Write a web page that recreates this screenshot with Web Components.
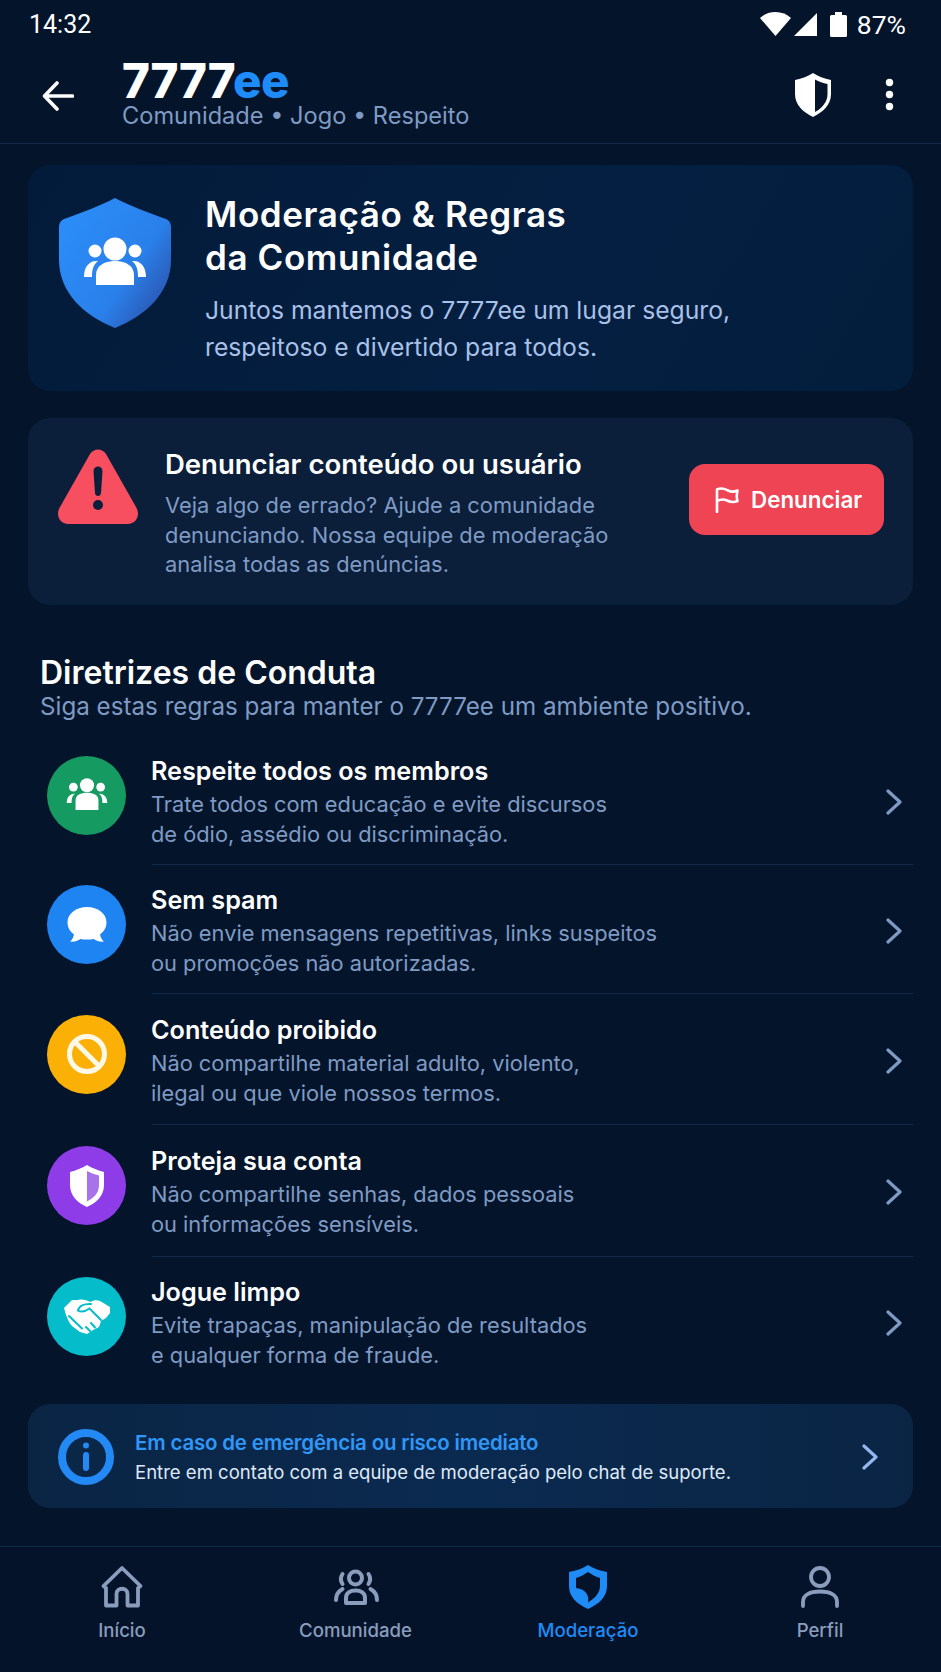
<!DOCTYPE html>
<html lang="pt">
<head>
<meta charset="utf-8">
<title>7777ee</title>
<style>
	html, body { margin: 0; height: 100%; }
	body {
		background: #04142a;
		color: #fff;
		font-family: Inter, "Noto Sans", sans-serif;
		width: 941px;
		height: 1672px;
		overflow: hidden;
	}
	#app { display: flex; flex-direction: column; height: 1672px; }
</style>
</head>
<body>
<div id="app">
	<status-bar></status-bar>
	<app-header></app-header>
	<page-main>
		<hero-card>
			<span slot="title">Moderação &amp; Regras<br>da Comunidade</span>
			Juntos mantemos o 7777ee um lugar seguro,<br>respeitoso e divertido para todos.
		</hero-card>
		<report-card>
			<span slot="title">Denunciar conteúdo ou usuário</span>
			Veja algo de errado? Ajude a comunidade<br>denunciando. Nossa equipe de moderação<br>analisa todas as denúncias.
		</report-card>
		<section-head>
			<span slot="title">Diretrizes de Conduta</span>
			Siga estas regras para manter o 7777ee um ambiente positivo.
		</section-head>
		<rule-list>
			<rule-row style="--c:#159a62;--h:130.4px">
				<svg slot="icon" width="44" height="36" viewBox="0 0 50 40" fill="#fff"><circle cx="25" cy="9" r="8"/><circle cx="9.500" cy="11" r="5"/><circle cx="40.500" cy="11" r="5"/><path d="M12 37V26C12 20 18 17.500 25 17.500S38 20 38 26V37Z"/><path d="M2 29C2 22 6 18 11.500 18.500 8 21 7.500 24.500 7.500 29Z"/><path d="M48 29C48 22 44 18 38.500 18.500 42 21 42.500 24.500 42.500 29Z"/></svg>
				<span slot="title">Respeite todos os membros</span>
				Trate todos com educação e evite discursos<br>de ódio, assédio ou discriminação.
			</rule-row>
			<rule-row style="--c:#1d84f2;--h:128.4px">
				<svg slot="icon" width="42" height="38" viewBox="0 0 42 38" fill="#fff"><path d="M21 1C32 1 40.500 7.500 40.500 16.500 40.500 21.500 38 25.500 34 28.500 34.500 31 36 34 38 35.500 34 36 30.500 35 27.500 33 25.500 33.500 23.500 33.500 21 33.500 18.500 33.500 16.500 33.500 14.500 33 11.500 35 8 36 4 35.500 6 34 7.500 31 8 28.500 4 25.500 1.500 21.500 1.500 16.500 1.500 7.500 10 1 21 1Z"/></svg>
				<span slot="title">Sem spam</span>
				Não envie mensagens repetitivas, links suspeitos<br>ou promoções não autorizadas.
			</rule-row>
			<rule-row style="--c:#fab005;--h:131.4px">
				<svg slot="icon" width="42" height="42" viewBox="0 0 42 42" fill="none" stroke="#fff8e6" stroke-width="5"><circle cx="21" cy="21" r="17.500"/><path d="M8.500 8.500 33.500 33.500"/></svg>
				<span slot="title">Conteúdo proibido</span>
				Não compartilhe material adulto, violento,<br>ilegal ou que viole nossos termos.
			</rule-row>
			<rule-row style="--c:#8d3ce8;--h:131.4px">
				<svg slot="icon" width="36" height="42" viewBox="0 0 36 42"><path fill="#fff" d="M18 0C23 3 29 5.500 35 7V20C35 31 27 38 18 42 9 38 1 31 1 20V7C7 5.500 13 3 18 0Z"/><path fill="#a873ea" d="M18 6C22 8 26 9.500 30 10.500V20C30 28 25 33 18 36.500Z"/></svg>
				<span slot="title">Proteja sua conta</span>
				Não compartilhe senhas, dados pessoais<br>ou informações sensíveis.
			</rule-row>
			<rule-row style="--c:#05bccb;--h:130.4px" last>
				<svg slot="icon" width="46" height="35" viewBox="0 0 46 35">
					<path fill="#fff" d="M0 9 8 1 14 1C18 0 23 1 26 3 30 1 33 1 36 2L46 8V14L42 19 37 22 35 28 29 31 23 35 16 33 8 27 5 23 2 16Z"/>
					<g fill="none" stroke="#05bccb" stroke-width="2" stroke-linecap="round">
						<path d="M14 11.500C15 7 20 4.500 27 5"/>
						<path d="M14 11.500C18 14 22 12 25.500 9.500L37 21"/>
						<path d="M5 17 18 29.500"/>
						<path d="M27 24 31 28.500M22 28 26 32"/>
					</g>
				</svg>
				<span slot="title">Jogue limpo</span>
				Evite trapaças, manipulação de resultados<br>e qualquer forma de fraude.
			</rule-row>
		</rule-list>
		<info-card>
			<span slot="title">Em caso de emergência ou risco imediato</span>
			Entre em contato com a equipe de moderação pelo chat de suporte.
		</info-card>
	</page-main>
	<bottom-nav>
		<nav-item>
			<svg slot="icon" width="44" height="44" viewBox="0 0 44 44" fill="none" stroke="#8a9dbd" stroke-width="3.800" stroke-linejoin="round"><path d="M3.500 21 22 3 40.500 21 38 23V40.500H27.500V29C27.500 22 16.500 22 16.500 29V40.500H6V23Z"/></svg>
			Início
		</nav-item>
		<nav-item>
			<svg slot="icon" width="50" height="40" viewBox="0 0 50 40" fill="none" stroke="#8a9dbd" stroke-width="4" stroke-linecap="round"><circle cx="24.500" cy="11" r="6.500"/><path d="M11.500 7C9.500 10 9.500 14 11.500 17M37.500 7C39.500 10 39.500 14 37.500 17"/><path d="M15 36V31C15 26 19 23.500 24.500 23.500S34 26 34 31V36Z" stroke-linejoin="round"/><path d="M5 33C5 27 8 24 11.500 22M46 33C46 27 43 24 39.500 22"/></svg>
			Comunidade
		</nav-item>
		<nav-item active>
			<svg slot="icon" width="40" height="44" viewBox="0 0 40 44"><path fill="#1f8bf5" d="M20 0C25 3.500 31 5.500 39 7V21C39 32 31 39 20 44 9 39 1 32 1 21V7C9 5.500 15 3.500 20 0Z"/><path fill="#041329" d="M20 7C24 9.500 27 11.500 32 13V21C32 28 27 33 20 37.500 21.500 31 18 24 8 23V13C13 11.500 16 9.500 20 7Z"/></svg>
			Moderação
		</nav-item>
		<nav-item>
			<svg slot="icon" width="40" height="42" viewBox="0 0 40 42" fill="none" stroke="#8a9dbd" stroke-width="3.800" stroke-linecap="round"><circle cx="20" cy="11" r="9"/><path d="M3 40V36C3 29 10 25.500 20 25.500S37 29 37 36V40"/></svg>
			Perfil
		</nav-item>
	</bottom-nav>
</div>
<script>
(function () {
	const chevron = `<svg width="18" height="26" viewBox="0 0 18 26" fill="none" stroke="currentColor" stroke-width="3.200" stroke-linecap="round" stroke-linejoin="round"><path d="M3 2 15 13 3 24"/></svg>`;

	// every element here is only markup and styles, so one helper does for all
	function define(name, html) {
		const tpl = document.createElement('template');
		tpl.innerHTML = html;
		customElements.define(name, class extends HTMLElement {
			constructor() {
				super();
				this.attachShadow({mode: 'open'});
				this.shadowRoot.appendChild(tpl.content.cloneNode(true));
			}
		});
	}

	define('status-bar', `
		<style>
		:host {
			display: flex;
			align-items: center;
			justify-content: space-between;
			box-sizing: border-box;
			height: 48px;
			padding: 0 35px 0 29px;
			font: 400 25px Roboto, sans-serif;
			color: #fff;
		}
		#icons { display: flex; align-items: center; }
		#pct { font-size: 26.500px; }
		svg { display: block; }
		</style>
		<span>14:32</span>
		<div id="icons">
			<svg width="31" height="24" viewBox="0 0 31 24" fill="#fff" style="margin-right:3px"><path d="M15.500 24 0 6C4 2 9.500 0 15.500 0S27 2 31 6Z"/></svg>
			<svg width="23" height="23" viewBox="0 0 23 23" fill="#fff" style="margin-right:13px"><path d="M23 0V23H0Z"/></svg>
			<svg width="17" height="25" viewBox="0 0 17 25" fill="#fff" style="margin-right:10px"><path d="M5 0H12V3H15.500Q17 3 17 4.500V23.500Q17 25 15.500 25H1.500Q0 25 0 23.500V4.500Q0 3 1.500 3H5Z"/></svg>
			<span id="pct">87%</span>
		</div>
	`);

	define('app-header', `
		<style>
		:host {
			display: flex;
			align-items: center;
			box-sizing: border-box;
			height: 96px;
			padding: 0 0 0 42px;
			border-bottom: 1px solid #10294a;
		}
		svg { display: block; flex: none; }
		#titles { flex: 1; margin-left: 48px; margin-top: -1px; }
		#logo { font-size: 47.500px; font-weight: 800; line-height: 40px; letter-spacing: -0.3px; color: #fff; }
		#logo span { color: #1d8cf8; }
		#sub { font-size: 23.600px; line-height: 28px; color: #7f9bc4; margin-top: 1px; }
		#shield { margin-right: 54px; margin-top: -2px; }
		#more { margin-right: 47px; margin-top: -2px; }
		</style>
		<svg width="32" height="30" viewBox="0 0 32 30" fill="none" stroke="#fff" stroke-width="3.600" stroke-linecap="round" stroke-linejoin="round"><path d="M30.500 15H3M15 2 2.500 15 15 28"/></svg>
		<div id="titles">
			<div id="logo">7777<span>ee</span></div>
			<div id="sub">Comunidade • Jogo • Respeito</div>
		</div>
		<svg id="shield" width="36" height="44" viewBox="0 0 36 44"><path fill="#fff" d="M18 0C23 3.500 29 5.500 36 7V21C36 32 28 39 18 44 8 39 0 32 0 21V7C7 5.500 13 3.500 18 0Z"/><path fill="#04142a" d="M20 6.500C24 8.500 28 10 32.500 11V21C32.500 29 27 35 20 39Z"/></svg>
		<svg id="more" width="9" height="33" viewBox="0 0 9 33" fill="#fff"><circle cx="4.500" cy="4.500" r="3.700"/><circle cx="4.500" cy="16.500" r="3.700"/><circle cx="4.500" cy="28.500" r="3.700"/></svg>
	`);

	define('page-main', `
		<style>
		:host {
			display: flex;
			flex-direction: column;
			flex: 1;
			box-sizing: border-box;
			padding: 21px 28px 0 28px;
		}
		</style>
		<slot></slot>
	`);

	define('hero-card', `
		<style>
		:host {
			display: flex;
			box-sizing: border-box;
			height: 226px;
			padding: 33px 0 0 31px;
			border-radius: 22px;
			background: linear-gradient(120deg, #031b3a 0%, #041f41 60%, #031d3c 100%);
		}
		svg { display: block; flex: none; }
		#text { margin-left: 34px; margin-top: -5px; }
		#title { font-size: 35px; font-weight: 600; line-height: 43px; letter-spacing: 0.6px; color: #fff; }
		#desc { font-size: 24.700px; line-height: 37px; color: #a9c1e8; margin-top: 13px; }
		</style>
		<svg width="112" height="130" viewBox="0 0 112 130">
			<path fill="url(#gHeroLocal)" d="M56 0C71 8 90 15 107 21 110 22.500 112 25 112 29V62C112 95 86 118 56 130 26 118 0 95 0 62V29C0 25 2 22.500 5 21 22 15 41 8 56 0Z"/>
			<defs><linearGradient id="gHeroLocal" x1="0.1" y1="0.15" x2="1" y2="0.85"><stop offset="0" stop-color="#2b8cf8"/><stop offset="0.6" stop-color="#2a80ea"/><stop offset="1" stop-color="#2b4ea6"/></linearGradient></defs>
			<g fill="#fff" transform="translate(25 39)">
				<circle cx="31" cy="12" r="11.500"/><circle cx="11" cy="14" r="6.500"/><circle cx="51" cy="14" r="6.500"/>
				<path d="M12 48V38C12 29 20 24 31 24S50 29 50 38V48Z"/>
				<path d="M0 40C0 29 6 23 14 24 9 28 8 33 8 40ZM62 40C62 29 56 23 48 24 53 28 54 33 54 40Z"/>
			</g>
		</svg>
		<div id="text">
			<div id="title"><slot name="title"></slot></div>
			<div id="desc"><slot></slot></div>
		</div>
	`);

	define('report-card', `
		<style>
		:host {
			display: flex;
			box-sizing: border-box;
			height: 187px;
			margin-top: 27px;
			padding: 31px 29px 0 30px;
			border-radius: 22px;
			background: #0b1e3a;
		}
		svg { display: block; flex: none; }
		#text { flex: 1; margin-left: 27px; margin-top: -2px; }
		#title { font-size: 27.500px; font-weight: 600; line-height: 34px; color: #fff; }
		#desc { font-size: 21.850px; line-height: 29.500px; color: #7f9bc4; margin-top: 10px; }
		#btn {
			display: flex;
			align-items: center;
			gap: 12px;
			box-sizing: border-box;
			width: 195px;
			height: 71px;
			margin-top: 15px;
			padding-left: 26px;
			border-radius: 16px;
			background: #ee4454;
			font-size: 22.400px;
			font-weight: 600;
			color: #fff;
		}
		</style>
		<svg width="80" height="75" viewBox="0 0 80 75">
			<path fill="#f74f60" d="M32 5C36 -1 44 -1 48 5L78 58C83 66 78 75 70 75H10C2 75 -3 66 2 58Z"/>
			<path fill="#0b1e3a" d="M35.500 22C35.500 16 44.500 16 44.500 22L43 44C42.800 48 37.200 48 37 44Z"/><circle cx="40" cy="56" r="5" fill="#0b1e3a"/>
		</svg>
		<div id="text">
			<div id="title"><slot name="title"></slot></div>
			<div id="desc"><slot></slot></div>
		</div>
		<div id="btn">
			<svg width="24" height="26" viewBox="0 0 24 26" fill="none" stroke="#fff" stroke-width="2.600" stroke-linejoin="round" stroke-linecap="round"><path d="M2 25V2.500C7 0 10 2 13 3.500 16 5 19 5 22.500 3.500 22 7 21 10 22.500 14 18 16 15 15 12 13.500 9 12 6 12 2 14"/></svg>
			<span>Denunciar</span>
		</div>
	`);

	define('section-head', `
		<style>
		:host { display: block; margin-top: 48px; padding-left: 12px; }
		#title { font-size: 32px; font-weight: 600; line-height: 40px; color: #fff; }
		#sub { font-size: 24.200px; line-height: 30px; color: #7f9bc4; margin-top: -1px; }
		</style>
		<div id="title"><slot name="title"></slot></div>
		<div id="sub"><slot></slot></div>
	`);

	define('rule-list', `
		<style>
		:host { display: flex; flex-direction: column; margin-top: 13px; height: 652px; }
		</style>
		<slot></slot>
	`);

	define('rule-row', `
		<style>
		:host { display: flex; flex: 0 0 var(--h); align-items: center; position: relative; padding-left: 19px; }
		:host(:not([last]))::after {
			content: '';
			position: absolute;
			left: 124px;
			right: 0;
			bottom: 0;
			height: 1px;
			background: #10294a;
		}
		#badge {
			display: flex;
			align-items: center;
			justify-content: center;
			flex: none;
			width: 79px;
			height: 79px;
			margin-bottom: 10px;
			border-radius: 50%;
			background: var(--c);
		}
		#text { flex: 1; margin-left: 25px; margin-top: 3px; }
		#title { font-size: 25.200px; font-weight: 600; line-height: 32px; color: #fff; }
		#desc { font-size: 21.800px; line-height: 30px; color: #7f9bc4; margin-top: 2px; }
		#chev { display: flex; margin-right: 10px; margin-top: 3px; color: #7f9bc4; }
		</style>
		<div id="badge"><slot name="icon"></slot></div>
		<div id="text">
			<div id="title"><slot name="title"></slot></div>
			<div id="desc"><slot></slot></div>
		</div>
		<div id="chev">${chevron}</div>
	`);

	define('info-card', `
		<style>
		:host {
			display: flex;
			align-items: center;
			box-sizing: border-box;
			height: 104px;
			margin-top: 17px;
			padding: 2px 34px 0 30px;
			border-radius: 22px;
			background: linear-gradient(90deg, #0a2544, #0b2a50 50%, #0a2544);
		}
		svg { display: block; flex: none; }
		#text { flex: 1; margin-left: 21px; margin-top: 0; }
		#title { font-size: 20.500px; font-weight: 600; line-height: 28px; letter-spacing: -0.2px; color: #2f97f8; }
		#desc { font-size: 18.550px; line-height: 26px; color: #dfe9f8; margin-top: 2px; }
		#chev { display: flex; color: #93b7ee; }
		</style>
		<svg width="56" height="56" viewBox="0 0 56 56"><circle cx="28" cy="28" r="24" fill="#0b2748" stroke="#2389f4" stroke-width="8"/><circle cx="28" cy="16.500" r="3" fill="#2389f4"/><rect x="25" y="23" width="6" height="19" rx="3" fill="#2389f4"/></svg>
		<div id="text">
			<div id="title"><slot name="title"></slot></div>
			<div id="desc"><slot></slot></div>
		</div>
		<div id="chev">${chevron}</div>
	`);

	define('bottom-nav', `
		<style>
		:host {
			display: grid;
			grid-template-columns: 234px 233px 232px 232px;
			box-sizing: border-box;
			height: 126px;
			padding: 0 0 0 5px;
			border-top: 1px solid #10294a;
			background: #041329;
		}
		</style>
		<slot></slot>
	`);

	define('nav-item', `
		<style>
		:host {
			display: flex;
			flex-direction: column;
			align-items: center;
			box-sizing: border-box;
			padding-top: 18px;
			font-size: 18.600px;
			font-weight: 500;
			color: #8a9dbd;
		}
		:host([active]) { color: #1f8bf5; font-weight: 500; }
		#icon { display: flex; align-items: center; justify-content: center; height: 44px; }
		#label { margin-top: 9px; line-height: 24px; }
		</style>
		<div id="icon"><slot name="icon"></slot></div>
		<div id="label"><slot></slot></div>
	`);
})();
</script>
</body>
</html>
